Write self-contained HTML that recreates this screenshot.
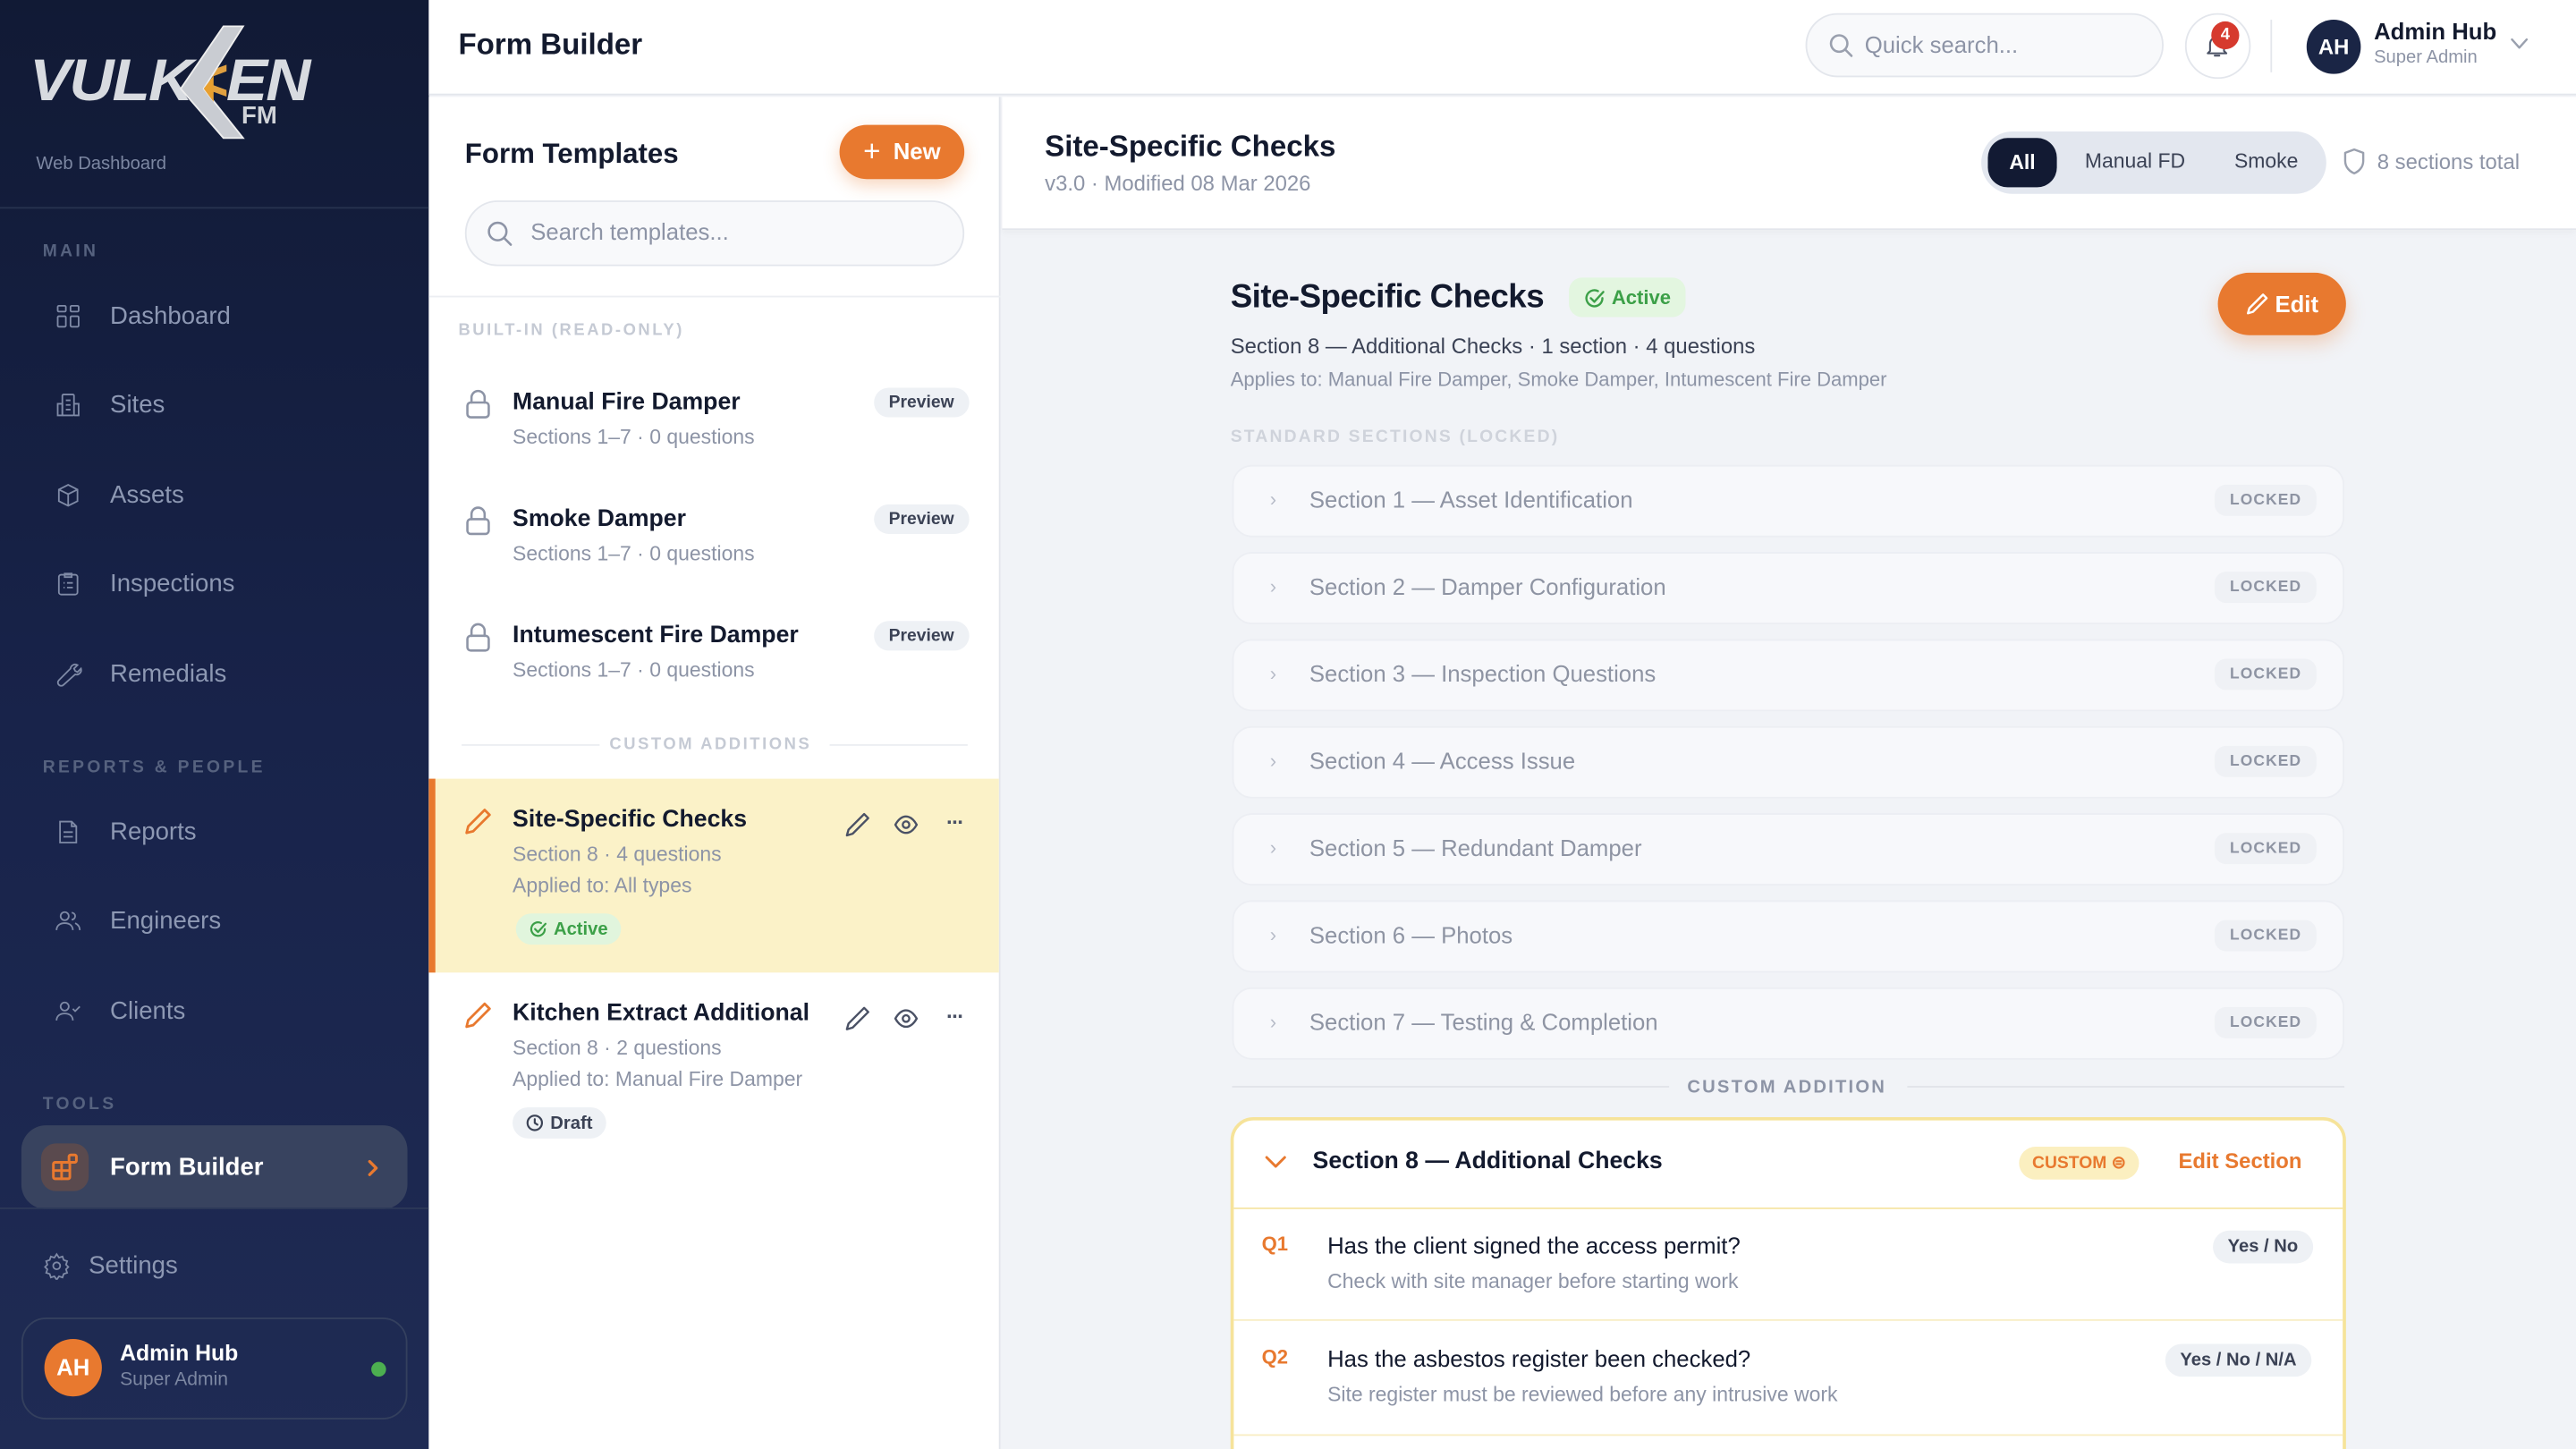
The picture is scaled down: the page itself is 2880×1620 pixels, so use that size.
<!DOCTYPE html>
<html><head><meta charset="utf-8"><style>
*{box-sizing:border-box;margin:0;padding:0}
html,body{width:2880px;height:1620px;overflow:hidden;background:#f1f3f7;font-family:"Liberation Sans",sans-serif}
#w{position:absolute;left:0;top:0;width:2880px;height:1620px;overflow:hidden}
#s{position:absolute;left:0;top:0;width:1568px;height:882px;overflow:hidden;transform:scale(1.836735);transform-origin:0 0;background:#f1f3f7}
.a{position:absolute}
.sb{left:0;top:0;width:261px;height:882px;background:linear-gradient(180deg,#111a35 0%,#18234a 50%,#1f2b54 100%)}
.nav{position:absolute;left:33px;font-size:15px;color:#8d98b3;display:flex;align-items:center}
.nav svg{width:17px;height:17px;margin-right:17px;fill:none;stroke:#7f8aa6;stroke-width:1.4}
.lbl{position:absolute;left:26px;font-size:10.5px;letter-spacing:1.8px;color:#56627f;font-weight:bold}
.t{color:#131a2e}
.g{color:#8d94a6}
.pill{display:inline-block;border-radius:10px;background:#eef1f5;color:#3b4255;font-weight:bold;font-size:10.5px;padding:3px 9px}
.sec{position:absolute;left:750px;width:677px;height:44px;border-radius:12px;background:#f7f8fb;border:1px solid #eceef3}
.sec .c{position:absolute;left:22px;top:13px;font-size:12px;color:#b7bcc8}
.sec .n{position:absolute;left:46px;top:12px;font-size:14px;color:#8e94a3}
.sec .l{position:absolute;right:16px;top:11px;font-size:9.5px;font-weight:bold;letter-spacing:.6px;color:#8e94a3;background:#eff1f5;border-radius:7px;padding:4px 9px}
.ic{fill:none;stroke-linecap:round;stroke-linejoin:round}
.bd{display:flex;align-items:center;gap:4px}
</style></head><body><div id="w"><div id="s">

<div class="a sb">
 <div class="a" style="left:22px;top:28px;font-size:36px;font-weight:900;font-style:italic;letter-spacing:-1px;color:#d8dbe0;transform:scaleX(1.05)">VULK<span style="color:#e0a040">&lt;</span>EN</div>
 <div class="a" style="left:147px;top:62px;font-size:15px;font-weight:bold;color:#d0d3d8">FM</div>
 <svg class="a" style="left:96px;top:14px" width="60" height="72"><path d="M52 2 L40 2 L14 40 L40 70 L52 70 L28 40 Z" fill="#c9ccd2" stroke="#eee" stroke-width="1"/><path d="M28 40 L34 32 L34 48 Z" fill="#e8a030"/></svg>
 <div class="a" style="left:22px;top:94px;font-size:11px;color:#7c87a2">Web Dashboard</div>
 <div class="a" style="left:0;top:126px;width:261px;height:1px;background:#27324f"></div>
 <div class="lbl" style="top:147px">MAIN</div>
 <div class="nav" style="top:184px"><svg viewBox="0 0 24 24"><rect x="3" y="3" width="7" height="5" rx="1"/><rect x="14" y="3" width="7" height="5" rx="1"/><rect x="3" y="12" width="7" height="9" rx="1"/><rect x="14" y="12" width="7" height="9" rx="1"/></svg>Dashboard</div>
 <div class="nav" style="top:238px"><svg viewBox="0 0 24 24"><rect x="7" y="3" width="10" height="18" rx="1"/><path d="M3 11h4v10H3zM17 11h4v10h-4M10 8h4M10 12h4M10 16h4"/></svg>Sites</div>
 <div class="nav" style="top:293px"><svg viewBox="0 0 24 24"><path d="M12 3l8 4v10l-8 4-8-4V7z M4 7l8 4 8-4M12 11v10"/></svg>Assets</div>
 <div class="nav" style="top:347px"><svg viewBox="0 0 24 24"><rect x="4" y="4" width="16" height="17" rx="2"/><path d="M9 3h6v3H9zM8 11h1M11 11h5M8 15h1M11 15h5"/></svg>Inspections</div>
 <div class="nav" style="top:402px"><svg viewBox="0 0 24 24"><path d="M14 7a4 4 0 0 1 6-3l-3 3 1 2 2 1 3-3a4 4 0 0 1-5 5L8 21a2 2 0 0 1-4-4l9-9z"/></svg>Remedials</div>
 <div class="lbl" style="top:461px">REPORTS &amp; PEOPLE</div>
 <div class="nav" style="top:498px"><svg viewBox="0 0 24 24"><path d="M5 3h10l4 4v14H5z M15 3v4h4 M8 12h8M8 16h8"/></svg>Reports</div>
 <div class="nav" style="top:552px"><svg viewBox="0 0 24 24"><circle cx="9" cy="8" r="3.5"/><path d="M2 20c0-4 3-6 7-6s7 2 7 6M15 5a3 3 0 0 1 0 6M18 14c2 1 4 3 4 6"/></svg>Engineers</div>
 <div class="nav" style="top:607px"><svg viewBox="0 0 24 24"><circle cx="9" cy="8" r="3.5"/><path d="M2 20c0-4 3-6 7-6s7 2 7 6M16 10l2 2 4-4"/></svg>Clients</div>
 <div class="lbl" style="top:666px">TOOLS</div>
 <div class="a" style="left:13px;top:685px;width:235px;height:51px;border-radius:15px;background:#38435f"></div>
 <div class="a" style="left:25px;top:696px;width:29px;height:29px;border-radius:9px;background:#5a4a4e"></div>
 <svg class="a ic" style="left:31px;top:702px" width="17" height="17" viewBox="0 0 17 17" stroke="#e8792f" stroke-width="1.6"><rect x="1.5" y="5.5" width="10" height="10" rx="1"/><path d="M6.5 5.5v10M1.5 10.5h10"/><rect x="11" y="1" width="4.5" height="4.5" rx="1"/></svg>
 <div class="a" style="left:67px;top:702px;font-size:15px;font-weight:bold;color:#fff">Form Builder</div>
 <svg class="a ic" style="left:223px;top:705px" width="8" height="12" viewBox="0 0 8 12" stroke="#e8792f" stroke-width="1.8"><path d="M2 2l4 4-4 4"/></svg>
 <div class="a" style="left:0;top:735px;width:261px;height:1px;background:#2c3858"></div>
 <div class="nav" style="left:26px;top:762px"><svg viewBox="0 0 24 24" style="margin-right:11px"><circle cx="12" cy="12" r="3"/><path d="M12 2l2 3 3-1 1 3 3 1-1 3 2 2-2 2 1 3-3 1-1 3-3-1-2 3-2-3-3 1-1-3-3-1 1-3-2-2 2-2-1-3 3-1 1-3 3 1z"/></svg>Settings</div>
 <div class="a" style="left:13px;top:802px;width:235px;height:62px;border-radius:15px;border:1px solid #34405e"></div>
 <div class="a" style="left:27px;top:815px;width:35px;height:35px;border-radius:50%;background:#e8792f;color:#fff;font-weight:bold;font-size:14px;text-align:center;line-height:35px">AH</div>
 <div class="a" style="left:73px;top:816px;font-size:13.5px;font-weight:bold;color:#fff">Admin Hub</div>
 <div class="a" style="left:73px;top:834px;font-size:11.5px;color:#7c87a2">Super Admin</div>
 <div class="a" style="left:226px;top:829px;width:9px;height:9px;border-radius:50%;background:#4caf50"></div>
</div>

<div class="a" style="left:261px;top:0;width:1307px;height:58px;background:#fff;border-bottom:1px solid #e3e6ec"></div>
<div class="a t" style="left:279px;top:17px;font-size:18px;font-weight:bold">Form Builder</div>
<div class="a" style="left:1099px;top:8px;width:218px;height:39px;border-radius:20px;border:1px solid #e3e6ec;background:#f8f9fb"></div>
<svg class="a ic" style="left:1113px;top:20px" width="15" height="15" viewBox="0 0 15 15" stroke="#9aa0ae" stroke-width="1.4"><circle cx="6.5" cy="6.5" r="5"/><path d="M10 10l4 4"/></svg>
<div class="a g" style="left:1135px;top:19px;font-size:14px">Quick search...</div>
<div class="a" style="left:1330px;top:8px;width:40px;height:40px;border-radius:50%;border:1px solid #e3e6ec;background:#fff"></div>
<svg class="a ic" style="left:1341px;top:19px" width="17" height="17" viewBox="0 0 24 24" stroke="#4a5165" stroke-width="1.6"><path d="M6 17V11a6 6 0 0 1 12 0v6l2 2H4zM10 21h4"/></svg>
<div class="a" style="left:1346px;top:13px;width:17px;height:17px;border-radius:50%;background:#d63a2e;color:#fff;font-size:10px;font-weight:bold;text-align:center;line-height:17px">4</div>
<div class="a" style="left:1382px;top:12px;width:1px;height:32px;background:#e3e6ec"></div>
<div class="a" style="left:1404px;top:12px;width:33px;height:33px;border-radius:50%;background:#1a2545;color:#fff;font-weight:bold;font-size:13px;text-align:center;line-height:33px">AH</div>
<div class="a t" style="left:1445px;top:11px;font-size:14px;font-weight:bold">Admin Hub</div>
<div class="a g" style="left:1445px;top:29px;font-size:11px">Super Admin</div>
<svg class="a ic" style="left:1528px;top:23px" width="11" height="8" viewBox="0 0 11 8" stroke="#9aa0ae" stroke-width="1.3"><path d="M1 1l4.5 5L10 1"/></svg>

<div class="a" style="left:261px;top:59px;width:348px;height:823px;background:#fff;border-right:1px solid #e3e6ec"></div>
<div class="a t" style="left:283px;top:84px;font-size:17px;font-weight:bold">Form Templates</div>
<div class="a" style="left:511px;top:76px;width:76px;height:33px;border-radius:17px;background:#e8792f;color:#fff;font-size:14px;font-weight:bold;line-height:33px;text-align:center;box-shadow:0 4px 10px rgba(232,121,47,.3)"><span style="font-size:18px;font-weight:normal;vertical-align:-1px">+</span>&nbsp; New</div>
<div class="a" style="left:283px;top:122px;width:304px;height:40px;border-radius:20px;border:1px solid #e3e6ec;background:#f8f9fb"></div>
<svg class="a ic" style="left:296px;top:134px" width="16" height="16" viewBox="0 0 15 15" stroke="#8d94a6" stroke-width="1.3"><circle cx="6.5" cy="6.5" r="5"/><path d="M10 10l4 4"/></svg>
<div class="a g" style="left:323px;top:133px;font-size:14px">Search templates...</div>
<div class="a" style="left:261px;top:180px;width:348px;height:1px;background:#eceef2"></div>
<div class="a" style="left:279px;top:196px;font-size:10px;font-weight:bold;letter-spacing:1.4px;color:#c5cad4">BUILT-IN (READ-ONLY)</div>

<div class="a" style="left:283px;top:237px"><svg class="ic" width="16" height="18" viewBox="0 0 16 18" stroke="#8d94a6" stroke-width="1.4"><rect x="1.5" y="8" width="13" height="9" rx="2"/><path d="M4 8V5a4 4 0 0 1 8 0v3"/></svg></div>
<div class="a t" style="left:312px;top:237px;font-size:14.5px;font-weight:bold">Manual Fire Damper</div>
<div class="a g" style="left:312px;top:259px;font-size:12.5px">Sections 1–7 · 0 questions</div>
<div class="a pill" style="left:532px;top:236px">Preview</div>

<div class="a" style="left:283px;top:308px"><svg class="ic" width="16" height="18" viewBox="0 0 16 18" stroke="#8d94a6" stroke-width="1.4"><rect x="1.5" y="8" width="13" height="9" rx="2"/><path d="M4 8V5a4 4 0 0 1 8 0v3"/></svg></div>
<div class="a t" style="left:312px;top:308px;font-size:14.5px;font-weight:bold">Smoke Damper</div>
<div class="a g" style="left:312px;top:330px;font-size:12.5px">Sections 1–7 · 0 questions</div>
<div class="a pill" style="left:532px;top:307px">Preview</div>

<div class="a" style="left:283px;top:379px"><svg class="ic" width="16" height="18" viewBox="0 0 16 18" stroke="#8d94a6" stroke-width="1.4"><rect x="1.5" y="8" width="13" height="9" rx="2"/><path d="M4 8V5a4 4 0 0 1 8 0v3"/></svg></div>
<div class="a t" style="left:312px;top:379px;font-size:14.5px;font-weight:bold">Intumescent Fire Damper</div>
<div class="a g" style="left:312px;top:401px;font-size:12.5px">Sections 1–7 · 0 questions</div>
<div class="a pill" style="left:532px;top:378px">Preview</div>

<div class="a" style="left:281px;top:453px;width:84px;height:1px;background:#eceef2"></div>
<div class="a" style="left:505px;top:453px;width:84px;height:1px;background:#eceef2"></div>
<div class="a" style="left:371px;top:448px;font-size:10px;font-weight:bold;letter-spacing:1.4px;color:#c5cad4">CUSTOM ADDITIONS</div>

<div class="a" style="left:261px;top:474px;width:347px;height:118px;background:#fbf2c8;border-left:4px solid #e8792f"></div>
<svg class="a ic" style="left:282px;top:491px" width="18" height="18" viewBox="0 0 18 18" stroke="#e8792f" stroke-width="1.5"><path d="M13 2l3 3L6 15l-4 1 1-4z"/></svg>
<div class="a t" style="left:312px;top:491px;font-size:14.5px;font-weight:bold">Site-Specific Checks</div>
<div class="a g" style="left:312px;top:513px;font-size:12.5px">Section 8 · 4 questions</div>
<div class="a g" style="left:312px;top:532px;font-size:12.5px">Applied to: All types</div>
<div class="a bd" style="left:314px;top:556px;height:19px;padding:0 8px;border-radius:10px;background:#e1f5dd;color:#3ca048;font-size:11px;font-weight:bold"><svg class="ic" width="11" height="11" viewBox="0 0 12 12" stroke="#3ca048" stroke-width="1.3"><path d="M10.5 6A4.5 4.5 0 1 1 8 2"/><path d="M4 6l2 2 5-5.5"/></svg>Active</div>
<svg class="a ic" style="left:514px;top:494px" width="16" height="16" viewBox="0 0 16 16" stroke="#4a5165" stroke-width="1.3"><path d="M12 1.5l2.5 2.5L5 13.5l-3.5 1 1-3.5z"/></svg>
<svg class="a ic" style="left:544px;top:496px" width="15" height="12" viewBox="0 0 15 12" stroke="#4a5165" stroke-width="1.3"><path d="M1 6c2-3.5 4-5 6.5-5S12 2.5 14 6c-2 3.5-4 5-6.5 5S3 9.5 1 6z"/><circle cx="7.5" cy="6" r="2"/></svg>
<div class="a" style="left:576px;top:493px;font-size:13px;font-weight:bold;color:#4a5165;letter-spacing:-1px">···</div>

<svg class="a ic" style="left:282px;top:609px" width="18" height="18" viewBox="0 0 18 18" stroke="#e8792f" stroke-width="1.5"><path d="M13 2l3 3L6 15l-4 1 1-4z"/></svg>
<div class="a t" style="left:312px;top:609px;font-size:14.5px;font-weight:bold">Kitchen Extract Additional</div>
<div class="a g" style="left:312px;top:631px;font-size:12.5px">Section 8 · 2 questions</div>
<div class="a g" style="left:312px;top:650px;font-size:12.5px">Applied to: Manual Fire Damper</div>
<div class="a bd" style="left:312px;top:674px;height:19px;padding:0 8px;border-radius:10px;background:#eef1f5;color:#3b4255;font-size:11px;font-weight:bold"><svg class="ic" width="11" height="11" viewBox="0 0 12 12" stroke="#3b4255" stroke-width="1.3"><circle cx="6" cy="6" r="4.8"/><path d="M6 3.5V6l1.8 1.2"/></svg>Draft</div>
<svg class="a ic" style="left:514px;top:612px" width="16" height="16" viewBox="0 0 16 16" stroke="#4a5165" stroke-width="1.3"><path d="M12 1.5l2.5 2.5L5 13.5l-3.5 1 1-3.5z"/></svg>
<svg class="a ic" style="left:544px;top:614px" width="15" height="12" viewBox="0 0 15 12" stroke="#4a5165" stroke-width="1.3"><path d="M1 6c2-3.5 4-5 6.5-5S12 2.5 14 6c-2 3.5-4 5-6.5 5S3 9.5 1 6z"/><circle cx="7.5" cy="6" r="2"/></svg>
<div class="a" style="left:576px;top:611px;font-size:13px;font-weight:bold;color:#4a5165;letter-spacing:-1px">···</div>

<div class="a" style="left:610px;top:59px;width:958px;height:81px;background:#fff;border-bottom:1px solid #e3e6ec;box-shadow:0 2px 4px rgba(0,0,0,.03)"></div>
<div class="a t" style="left:636px;top:79px;font-size:18px;font-weight:bold">Site-Specific Checks</div>
<div class="a g" style="left:636px;top:104px;font-size:13px">v3.0 · Modified 08 Mar 2026</div>
<div class="a" style="left:1206px;top:80px;width:210px;height:38px;border-radius:19px;background:#e3e7ef"></div>
<div class="a" style="left:1210px;top:84px;width:42px;height:30px;border-radius:12px;background:#121a33;color:#fff;font-size:12.5px;font-weight:bold;text-align:center;line-height:30px">All</div>
<div class="a" style="left:1269px;top:91px;font-size:12.5px;color:#3b4255">Manual FD</div>
<div class="a" style="left:1360px;top:91px;font-size:12.5px;color:#3b4255">Smoke</div>
<svg class="a ic" style="left:1426px;top:90px" width="14" height="17" viewBox="0 0 14 17" stroke="#9aa0ae" stroke-width="1.3"><path d="M7 1l5.5 2v5c0 4-3 6.5-5.5 7.5C4.5 14.5 1.5 12 1.5 8V3z"/></svg>
<div class="a g" style="left:1447px;top:91px;font-size:13px">8 sections total</div>

<div class="a t" style="left:749px;top:170px;font-size:20px;font-weight:bold;letter-spacing:-.3px">Site-Specific Checks</div>
<div class="a bd" style="left:955px;top:169px;height:24px;padding:0 9px;border-radius:8px;background:#e3f6e0;color:#3ca048;font-size:12px;font-weight:bold"><svg class="ic" width="13" height="13" viewBox="0 0 12 12" stroke="#3ca048" stroke-width="1.2"><path d="M10.5 6A4.5 4.5 0 1 1 8 2"/><path d="M4 6l2 2 5-5.5"/></svg>Active</div>
<div class="a bd" style="left:1350px;top:166px;width:78px;height:38px;justify-content:center;border-radius:19px;background:#e8792f;color:#fff;font-size:14px;font-weight:bold;box-shadow:0 5px 12px rgba(232,121,47,.3)"><svg class="ic" width="14" height="14" viewBox="0 0 16 16" stroke="#fff" stroke-width="1.5"><path d="M12 1.5l2.5 2.5L5 13.5l-3.5 1 1-3.5z"/></svg>Edit</div>
<div class="a" style="left:749px;top:203px;font-size:13px;color:#3b4255">Section 8 — Additional Checks · 1 section · 4 questions</div>
<div class="a g" style="left:749px;top:224px;font-size:12px">Applies to: Manual Fire Damper, Smoke Damper, Intumescent Fire Damper</div>
<div class="a" style="left:749px;top:260px;font-size:10.5px;font-weight:bold;letter-spacing:1.2px;color:#cfd3db">STANDARD SECTIONS (LOCKED)</div>

<div class="sec" style="top:283px"><span class="c">›</span><span class="n">Section 1 — Asset Identification</span><span class="l">LOCKED</span></div>
<div class="sec" style="top:336px"><span class="c">›</span><span class="n">Section 2 — Damper Configuration</span><span class="l">LOCKED</span></div>
<div class="sec" style="top:389px"><span class="c">›</span><span class="n">Section 3 — Inspection Questions</span><span class="l">LOCKED</span></div>
<div class="sec" style="top:442px"><span class="c">›</span><span class="n">Section 4 — Access Issue</span><span class="l">LOCKED</span></div>
<div class="sec" style="top:495px"><span class="c">›</span><span class="n">Section 5 — Redundant Damper</span><span class="l">LOCKED</span></div>
<div class="sec" style="top:548px"><span class="c">›</span><span class="n">Section 6 — Photos</span><span class="l">LOCKED</span></div>
<div class="sec" style="top:601px"><span class="c">›</span><span class="n">Section 7 — Testing &amp; Completion</span><span class="l">LOCKED</span></div>

<div class="a" style="left:750px;top:661px;width:266px;height:1px;background:#e0e3e9"></div>
<div class="a" style="left:1161px;top:661px;width:266px;height:1px;background:#e0e3e9"></div>
<div class="a" style="left:1027px;top:656px;font-size:11px;font-weight:bold;letter-spacing:1.2px;color:#8d94a6">CUSTOM ADDITION</div>

<div class="a" style="left:749px;top:680px;width:679px;height:240px;border-radius:14px;border:2px solid #f6e39a;background:#fff"></div>
<div class="a" style="left:751px;top:735px;width:675px;height:1px;background:#f6e6a8"></div>
<div class="a" style="left:751px;top:803px;width:675px;height:1px;background:#f8edc3"></div>
<div class="a" style="left:751px;top:873px;width:675px;height:1px;background:#f8edc3"></div>
<svg class="a ic" style="left:770px;top:703px" width="13" height="9" viewBox="0 0 13 9" stroke="#e8792f" stroke-width="1.6"><path d="M1 1.5l5.5 5.5L12 1.5"/></svg>
<div class="a t" style="left:799px;top:699px;font-size:14.5px;font-weight:bold">Section 8 — Additional Checks</div>
<div class="a" style="left:1229px;top:698px;height:20px;padding:0 8px;border-radius:10px;background:#fbefc0;color:#e8792f;font-size:10.5px;font-weight:bold;line-height:20px">CUSTOM ⊜</div>
<div class="a" style="left:1326px;top:699px;font-size:13px;font-weight:bold;color:#e8792f">Edit Section</div>

<div class="a" style="left:768px;top:750px;font-size:12px;font-weight:bold;color:#e8792f">Q1</div>
<div class="a t" style="left:808px;top:750px;font-size:14px">Has the client signed the access permit?</div>
<div class="a g" style="left:808px;top:773px;font-size:12.5px">Check with site manager before starting work</div>
<div class="a pill" style="left:1347px;top:749px;font-size:11px;padding:4px 9px">Yes / No</div>

<div class="a" style="left:768px;top:819px;font-size:12px;font-weight:bold;color:#e8792f">Q2</div>
<div class="a t" style="left:808px;top:819px;font-size:14px">Has the asbestos register been checked?</div>
<div class="a g" style="left:808px;top:842px;font-size:12.5px">Site register must be reviewed before any intrusive work</div>
<div class="a pill" style="left:1318px;top:818px;font-size:11px;padding:4px 9px">Yes / No / N/A</div>

</div></div></body></html>
